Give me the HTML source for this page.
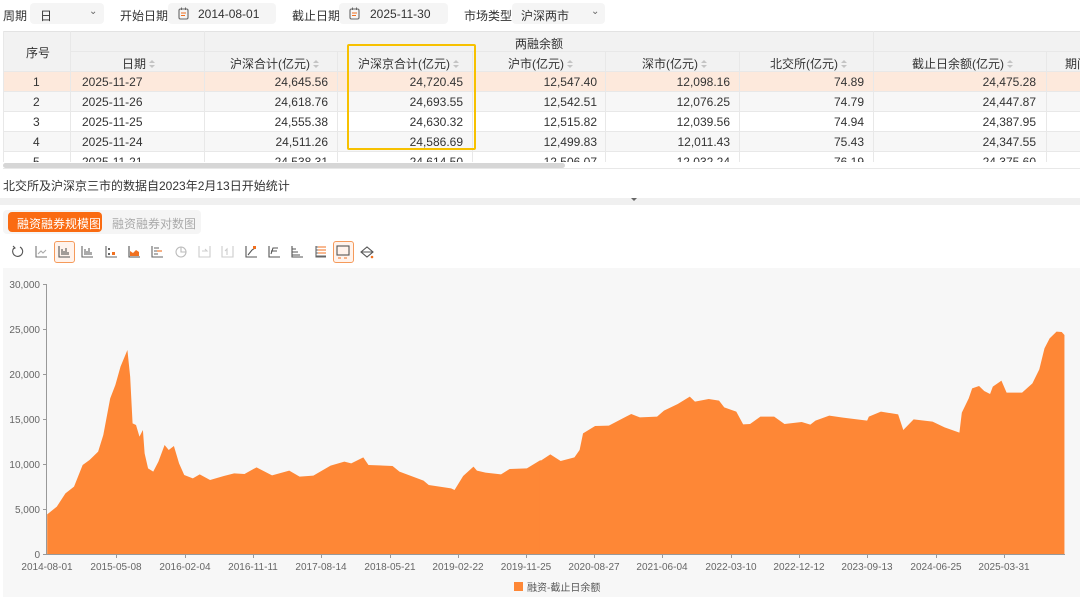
<!DOCTYPE html>
<html><head><meta charset="utf-8"><style>
*{box-sizing:border-box;margin:0;padding:0}
body{width:1080px;height:597px;overflow:hidden;background:#fff;font-family:"Liberation Sans","Noto Sans CJK SC",sans-serif;font-size:12px;color:#333;position:relative}
.a{position:absolute}
.box{position:absolute;background:#f5f5f5;border-radius:4px;height:21px;top:3px}
.lbl{position:absolute;top:7px;font-size:12px;color:#333}
.t{position:absolute;white-space:nowrap;font-size:12px;color:#333}
.hl{position:absolute;background:#e8e8e8}
.sort{display:inline-block;width:6px;height:9px;vertical-align:-1px;margin-left:3px;position:relative}
.sort:before{content:"";position:absolute;left:0;top:0;border-left:3px solid transparent;border-right:3px solid transparent;border-bottom:3.5px solid #c4c4c4}
.sort:after{content:"";position:absolute;left:0;top:5px;border-left:3px solid transparent;border-right:3px solid transparent;border-top:3.5px solid #c4c4c4}
.num{text-align:right}
</style></head><body>
<!-- top controls -->
<div class="lbl" style="left:3px">周期</div>
<div class="box" style="left:30px;width:74px"></div>
<div class="lbl" style="left:40px">日</div>
<div class="lbl" style="left:89px;color:#666;font-size:10px;top:6px">⌄</div>
<div class="lbl" style="left:120px">开始日期</div>
<div class="box" style="left:168px;width:108px"></div>
<svg class="a" style="left:178px;top:7px" width="11" height="13"><rect x="1" y="2" width="9" height="10" rx="1.5" fill="none" stroke="#666" stroke-width="1.1"/><line x1="3.5" y1="0.5" x2="3.5" y2="3" stroke="#666"/><line x1="7.5" y1="0.5" x2="7.5" y2="3" stroke="#666"/><line x1="3" y1="6" x2="8" y2="6" stroke="#f07020"/><line x1="3" y1="8.5" x2="7" y2="8.5" stroke="#f07020"/></svg>
<div class="lbl" style="left:198px">2014-08-01</div>
<div class="lbl" style="left:292px">截止日期</div>
<div class="box" style="left:339px;width:109px"></div>
<svg class="a" style="left:349px;top:7px" width="11" height="13"><rect x="1" y="2" width="9" height="10" rx="1.5" fill="none" stroke="#666" stroke-width="1.1"/><line x1="3.5" y1="0.5" x2="3.5" y2="3" stroke="#666"/><line x1="7.5" y1="0.5" x2="7.5" y2="3" stroke="#666"/><line x1="3" y1="6" x2="8" y2="6" stroke="#f07020"/><line x1="3" y1="8.5" x2="7" y2="8.5" stroke="#f07020"/></svg>
<div class="lbl" style="left:370px">2025-11-30</div>
<div class="lbl" style="left:464px">市场类型</div>
<div class="box" style="left:512px;width:93px"></div>
<div class="lbl" style="left:521px">沪深两市</div>
<div class="lbl" style="left:591px;color:#666;font-size:10px;top:6px">⌄</div>

<!-- table -->
<div class="a" style="left:3px;top:31px;width:1077px;height:41px;background:#f2f2f2;border-top:1px solid #e3e3e3"></div>
<div class="a" style="left:3px;top:71px;width:1077px;height:20px;background:#fde9dc"></div>
<div class="a" style="left:3px;top:91px;width:1077px;height:20px;background:#f7f7f7"></div>
<div class="a" style="left:3px;top:111px;width:1077px;height:20px;background:#fff"></div>
<div class="a" style="left:3px;top:131px;width:1077px;height:20px;background:#f7f7f7"></div>
<!-- horizontal lines -->
<div class="hl" style="left:70px;top:51px;width:1010px;height:1px"></div>
<div class="hl" style="left:3px;top:71px;width:1077px;height:1px"></div>
<div class="hl" style="left:3px;top:91px;width:1077px;height:1px"></div>
<div class="hl" style="left:3px;top:111px;width:1077px;height:1px"></div>
<div class="hl" style="left:3px;top:131px;width:1077px;height:1px"></div>
<div class="hl" style="left:3px;top:151px;width:1077px;height:1px"></div>
<!-- vertical lines -->
<div class="hl" style="left:3px;top:31px;width:1px;height:131px"></div>
<div class="hl" style="left:70px;top:31px;width:1px;height:131px"></div>
<div class="hl" style="left:204px;top:31px;width:1px;height:131px"></div>
<div class="hl" style="left:337px;top:51px;width:1px;height:111px"></div>
<div class="hl" style="left:472px;top:51px;width:1px;height:111px"></div>
<div class="hl" style="left:605px;top:51px;width:1px;height:111px"></div>
<div class="hl" style="left:739px;top:51px;width:1px;height:111px"></div>
<div class="hl" style="left:873px;top:31px;width:1px;height:131px"></div>
<div class="hl" style="left:1046px;top:51px;width:1px;height:111px"></div>
<!-- headers -->
<div class="t" style="left:26px;top:44px">序号</div>
<div class="t" style="left:515px;top:35px">两融余额</div>
<div class="t" style="left:122px;top:55px">日期<span class="sort"></span></div>
<div class="t" style="left:230px;top:55px">沪深合计(亿元)<span class="sort"></span></div>
<div class="t" style="left:358px;top:55px">沪深京合计(亿元)<span class="sort"></span></div>
<div class="t" style="left:508px;top:55px">沪市(亿元)<span class="sort"></span></div>
<div class="t" style="left:642px;top:55px">深市(亿元)<span class="sort"></span></div>
<div class="t" style="left:770px;top:55px">北交所(亿元)<span class="sort"></span></div>
<div class="t" style="left:912px;top:55px">截止日余额(亿元)<span class="sort"></span></div>
<div class="t" style="left:1065px;top:55px">期间</div>
<!-- rows -->
<div class="a" style="left:0;top:75px;width:1080px;height:90px;overflow:hidden">
<div style="position:relative;height:20px">
<div class="t" style="left:33px;top:0">1</div><div class="t" style="left:82px;top:0">2025-11-27</div>
<div class="t num" style="right:752px;top:0">24,645.56</div><div class="t num" style="right:617px;top:0">24,720.45</div>
<div class="t num" style="right:483px;top:0">12,547.40</div><div class="t num" style="right:350px;top:0">12,098.16</div>
<div class="t num" style="right:216px;top:0">74.89</div><div class="t num" style="right:44px;top:0">24,475.28</div></div>
<div style="position:relative;height:20px">
<div class="t" style="left:33px;top:0">2</div><div class="t" style="left:82px;top:0">2025-11-26</div>
<div class="t num" style="right:752px;top:0">24,618.76</div><div class="t num" style="right:617px;top:0">24,693.55</div>
<div class="t num" style="right:483px;top:0">12,542.51</div><div class="t num" style="right:350px;top:0">12,076.25</div>
<div class="t num" style="right:216px;top:0">74.79</div><div class="t num" style="right:44px;top:0">24,447.87</div></div>
<div style="position:relative;height:20px">
<div class="t" style="left:33px;top:0">3</div><div class="t" style="left:82px;top:0">2025-11-25</div>
<div class="t num" style="right:752px;top:0">24,555.38</div><div class="t num" style="right:617px;top:0">24,630.32</div>
<div class="t num" style="right:483px;top:0">12,515.82</div><div class="t num" style="right:350px;top:0">12,039.56</div>
<div class="t num" style="right:216px;top:0">74.94</div><div class="t num" style="right:44px;top:0">24,387.95</div></div>
<div style="position:relative;height:20px">
<div class="t" style="left:33px;top:0">4</div><div class="t" style="left:82px;top:0">2025-11-24</div>
<div class="t num" style="right:752px;top:0">24,511.26</div><div class="t num" style="right:617px;top:0">24,586.69</div>
<div class="t num" style="right:483px;top:0">12,499.83</div><div class="t num" style="right:350px;top:0">12,011.43</div>
<div class="t num" style="right:216px;top:0">75.43</div><div class="t num" style="right:44px;top:0">24,347.55</div></div>
<div style="position:relative;height:20px">
<div class="t" style="left:33px;top:0">5</div><div class="t" style="left:82px;top:0">2025-11-21</div>
<div class="t num" style="right:752px;top:0">24,538.31</div><div class="t num" style="right:617px;top:0">24,614.50</div>
<div class="t num" style="right:483px;top:0">12,506.07</div><div class="t num" style="right:350px;top:0">12,032.24</div>
<div class="t num" style="right:216px;top:0">76.19</div><div class="t num" style="right:44px;top:0">24,375.60</div></div>
</div>
<div class="a" style="left:0;top:162px;width:1080px;height:7px;background:#fff"></div>
<div class="a" style="left:3px;top:163px;width:562px;height:5px;background:#d6d6d6;border-radius:3px"></div>
<div class="a" style="left:3px;top:168px;width:1077px;height:1px;background:#e8e8e8"></div>
<!-- yellow highlight -->
<div class="a" style="left:347px;top:44px;width:129px;height:106px;border:2.5px solid #f7c100;border-radius:2px"></div>

<div class="t" style="left:3px;top:177px">北交所及沪深京三市的数据自2023年2月13日开始统计</div>
<div class="a" style="left:0;top:198px;width:1080px;height:7px;background:#f0f0f0"></div>
<div class="a" style="left:631px;top:198px;border-left:3px solid transparent;border-right:3px solid transparent;border-top:3px solid #666"></div>

<!-- tabs -->
<div class="a" style="left:3px;top:210px;width:198px;height:24px;background:#f5f5f5;border-radius:4px"></div>
<div class="a" style="left:8px;top:212px;width:94px;height:20px;background:#fa6b12;border-radius:4px"></div>
<div class="t" style="left:17px;top:215px;color:#fff">融资融券规模图</div>
<div class="t" style="left:112px;top:215px;color:#aaa">融资融券对数图</div>

<!-- toolbar icons -->
<div class="a" style="left:54px;top:241px;width:21px;height:22px;border:1px solid #f59a5a;border-radius:3px;background:#fff3ec"></div>
<div class="a" style="left:333px;top:241px;width:21px;height:22px;border:1px solid #f59a5a;border-radius:3px;background:#fff3ec"></div>
<svg class="a" style="left:0;top:240px" width="380" height="25" fill="none" stroke-width="1.1">
<path d="M20,7 A5,5 0 1 1 14,8" stroke="#555"/><path d="M13,6 l2,2 -2,1" stroke="#555"/>
<path d="M36,6 v11 h11" stroke="#777"/><path d="M38,14 l3,-3 2,2 3,-3" stroke="#aaa"/>
<path d="M59,6 v11 h11 M62,15 v-6 M64,15 v-4 M66,15 v-7 M68,15 v-3" stroke="#555"/>
<path d="M82,6 v11 h11 M85,15 v-6 M87,15 v-4 M89,15 v-7 M91,15 v-3" stroke="#666"/>
<path d="M106,6 v11 h11" stroke="#666"/><rect x="108" y="8" width="2" height="2" fill="#666"/><rect x="112" y="12" width="3" height="3" fill="#f07020" stroke="none"/><rect x="108" y="13" width="2" height="2" fill="#666"/>
<path d="M129,6 v11 h11" stroke="#555"/><path d="M130,16 v-5 l3,2 3,-3 3,2 v4 z" fill="#f07020" stroke="none"/>
<path d="M152,6 v11 h11 M154,8 h5 M154,11 h8 M154,14 h4" stroke="#666"/><path d="M157,11 h5" stroke="#f07020"/>
<circle cx="181" cy="12" r="5" stroke="#bbb"/><path d="M181,7 v5 h5" stroke="#bbb"/>
<path d="M199,6 v11 h11 v-11 M202,11 h5 l-2,-2" stroke="#ccc"/>
<path d="M222,6 v11 h11 v-11 M227,15 v-6 l-2,2" stroke="#ccc"/>
<path d="M246,6 v11 h11 M248,15 l4,-5 3,-2" stroke="#555"/><rect x="253" y="6" width="3" height="3" fill="#f07020" stroke="none"/>
<path d="M269,6 v11 h11 M271,14 l2,-6 h5 M271,11 h6" stroke="#555"/>
<path d="M292,6 v11 h11 M292,9 h4 M292,12 h6 M292,15 h8" stroke="#555"/>
<path d="M316,6 v11 h10 M316,7 h10 M316,10 h10 M316,13 h10 M316,16 h10" stroke="#666"/><path d="M318,7 h8 M318,10 h8 M318,13 h8" stroke="#f07020"/>
<rect x="337" y="6" width="12" height="9" stroke="#555"/><path d="M338,18 h3 M344,18 h3" stroke="#f07020"/>
<path d="M361,12 l6,-5 6,5 -6,5 z M361,12 h12" stroke="#555"/><circle cx="372" cy="17" r="1.3" fill="#f07020" stroke="none"/>
</svg>

<!-- chart -->
<div class="a" style="left:3px;top:268px;width:1077px;height:329px;background:#f7f7f7"></div>
<svg class="a" style="left:0;top:0" width="1080" height="597">
<g transform="translate(0,270) scale(0.34435,0.33333)" fill="#fe8736">
<path d="M137,853 L137,733 L165,710 L190,670 L215,650 L240,585 L260,570 L285,545 L300,495 L320,385 L335,345 L350,290 L370,240 L378,320 L385,460 L395,465 L405,500 L415,480 L420,550 L430,595 L445,605 L460,575 L478,525 L490,540 L505,528 L520,580 L535,615 L560,625 L580,613 L610,630 L650,618 L680,610 L710,612 L745,592 L790,616 L840,602 L870,620 L910,617 L960,587 L1000,575 L1020,580 L1055,562 L1070,585 L1140,588 L1160,605 L1230,632 L1245,645 L1310,655 L1320,660 L1345,618 L1375,590 L1385,602 L1410,608 L1455,613 L1480,597 L1530,595 L1570,570 L1570,853 Z"/>
</g>
<g transform="translate(540,270) scale(0.34435,0.33333)" fill="#fe8736">
<path d="M-2,853 L-2,575 L30,553 L60,573 L100,562 L115,540 L125,490 L160,468 L200,467 L250,440 L265,432 L290,442 L340,440 L360,422 L400,402 L435,380 L450,395 L490,387 L520,392 L535,412 L570,425 L590,463 L610,462 L640,440 L680,440 L710,462 L760,456 L785,464 L800,452 L840,437 L880,443 L950,452 L955,440 L990,425 L1040,433 L1055,480 L1085,448 L1140,455 L1175,472 L1218,488 L1225,428 L1245,385 L1255,355 L1275,348 L1290,363 L1307,372 L1315,350 L1340,332 L1355,368 L1400,368 L1430,340 L1450,298 L1465,235 L1480,205 L1500,185 L1515,186 L1523,195 L1523,853 Z"/>
</g>
<g stroke="#999" stroke-width="1">
<line x1="46.5" y1="284" x2="46.5" y2="554"/>
<line x1="46" y1="554.5" x2="1065" y2="554.5"/>
<line x1="43" y1="284.5" x2="46" y2="284.5"/><line x1="43" y1="329.5" x2="46" y2="329.5"/><line x1="43" y1="374.5" x2="46" y2="374.5"/><line x1="43" y1="419.5" x2="46" y2="419.5"/><line x1="43" y1="464.5" x2="46" y2="464.5"/><line x1="43" y1="509.5" x2="46" y2="509.5"/><line x1="43" y1="554.5" x2="46" y2="554.5"/>
</g>
<g stroke="#999"><path d="M116.5,554v4M185.5,554v4M253.5,554v4M321.5,554v4M390.5,554v4M458.5,554v4M526.5,554v4M594.5,554v4M662.5,554v4M731.5,554v4M799.5,554v4M867.5,554v4M936.5,554v4M1004.5,554v4"/></g>
<g font-family="Liberation Sans, sans-serif" font-size="10" fill="#666" text-anchor="end">
<text x="40" y="288">30,000</text><text x="40" y="333">25,000</text><text x="40" y="378">20,000</text><text x="40" y="423">15,000</text><text x="40" y="468">10,000</text><text x="40" y="513">5,000</text><text x="40" y="558">0</text>
</g>
<g font-family="Liberation Sans, sans-serif" font-size="10" fill="#666" text-anchor="middle">
<text x="47" y="570">2014-08-01</text><text x="116" y="570">2015-05-08</text><text x="185" y="570">2016-02-04</text><text x="253" y="570">2016-11-11</text><text x="321" y="570">2017-08-14</text><text x="390" y="570">2018-05-21</text><text x="458" y="570">2019-02-22</text><text x="526" y="570">2019-11-25</text><text x="594" y="570">2020-08-27</text><text x="662" y="570">2021-06-04</text><text x="731" y="570">2022-03-10</text><text x="799" y="570">2022-12-12</text><text x="867" y="570">2023-09-13</text><text x="936" y="570">2024-06-25</text><text x="1004" y="570">2025-03-31</text>
</g>
<rect x="514" y="582" width="9" height="9" fill="#fe8736"/>
<text x="527" y="591" font-family="Liberation Sans, Noto Sans CJK SC, sans-serif" font-size="10" fill="#555">融资-截止日余额</text>
</svg>
</body></html>
